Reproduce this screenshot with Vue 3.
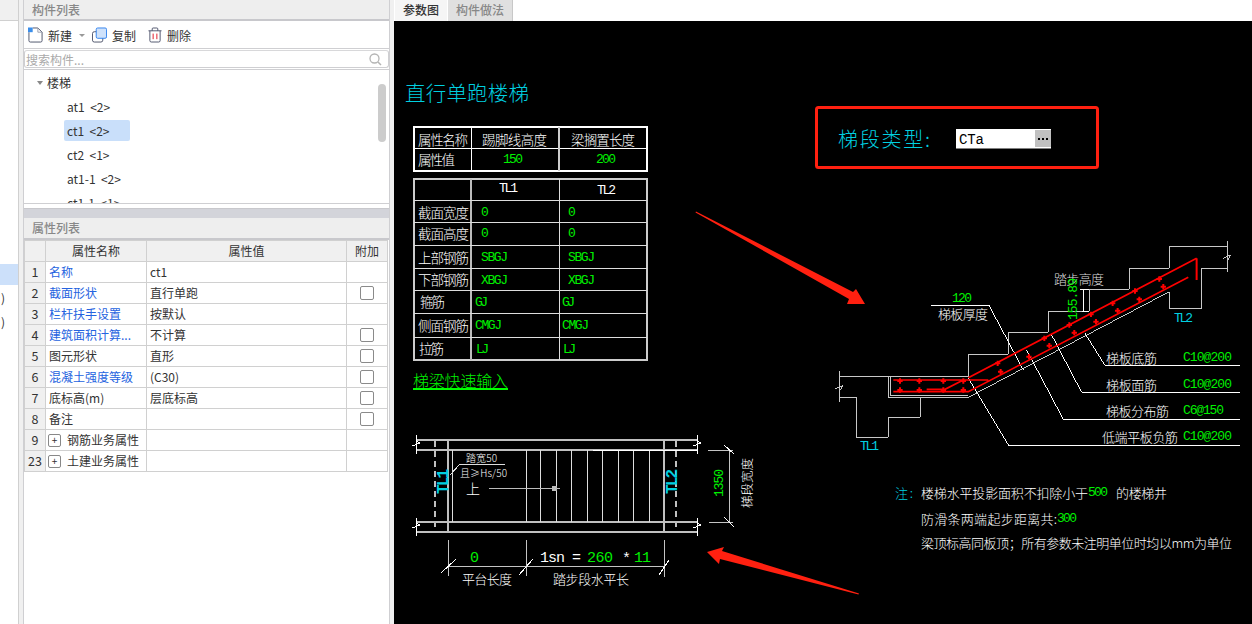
<template>
  <div class="app">
    <div class="strip">
      <div class="strip-top"></div>
      <div class="strip-sel"></div>
      <div class="strip-row">)</div>
      <div class="strip-row">)</div>
    </div>

    <div class="panels">
      <div class="panel-title">构件列表</div>
      <div class="toolbar">
        <svg class="tool-icon" width="15" height="16" viewBox="0 0 16 16">
          <path d="M1 5V14a1.5 1.5 0 0 0 1.5 1.5H13.5A1.500 1.500 0 0 0 15 14V5L10.500 .5H5" fill="none" stroke="#4a5068" />
          <path d="M10.500 .5V5H15" fill="none" stroke="#9aa0b0" />
          <rect x="0" y="0" width="5" height="5" fill="#3b8eea" />
        </svg>
        <span class="tool-label">新建</span>
        <span class="tool-caret"></span>
        <svg class="tool-icon copy" width="15" height="16" viewBox="0 0 16 16">
          <rect x=".5" y="4.500" width="11" height="11" rx="2" fill="#fff" stroke="#4a5068" />
          <rect x="4.500" y=".5" width="11" height="11" rx="1.500" fill="#cfe2fb" stroke="#2f80ed" />
        </svg>
        <span class="tool-label">复制</span>
        <svg class="tool-icon trash" width="14" height="16" viewBox="0 0 15 16">
          <path d="M.5 3.500H14.500M4.500 3.500V1.500A1 1 0 0 1 5.500 .5H9.500A1 1 0 0 1 10.500 1.500V3.500M2 3.500V14A1.500 1.500 0 0 0 3.500 15.500H11.500A1.500 1.500 0 0 0 13 14V3.500" fill="none" stroke="#4a5068" />
          <path d="M5.500 6.500V12.500M9.500 6.500V12.500" stroke="#e01020" />
        </svg>
        <span class="tool-label">删除</span>
      </div>
      <div class="search">
        <span>搜索构件...</span>
        <svg width="13" height="13" viewBox="0 0 13 13">
          <circle cx="5.500" cy="5.500" r="4.500" fill="none" stroke="#b4b4b4" stroke-width="1.300" />
          <path d="M9 9L12 12" stroke="#b4b4b4" stroke-width="1.500" />
        </svg>
      </div>
      <div class="tree">
        <div class="tree-root"><i class="tree-caret"></i>楼梯</div>
        <div
          v-for="item in treeItems"
          :key="item.name"
          :class="['tree-item', { selected: item.name === 'ct1' }]"
        >{{ item.name }}&nbsp; &lt;{{ item.count }}&gt;</div>
        <div class="tree-scroll"></div>
      </div>

      <div class="splitter"></div>
      <div class="panel-title second">属性列表</div>
      <div class="props">
        <table>
          <colgroup>
            <col style="width: 21px" />
            <col style="width: 101px" />
            <col style="width: 200px" />
            <col style="width: 41px" />
          </colgroup>
          <thead>
            <tr>
              <th></th>
              <th>属性名称</th>
              <th>属性值</th>
              <th>附加</th>
            </tr>
          </thead>
          <tbody>
            <tr v-for="row in propRows" :key="row.no">
              <td class="num">{{ row.no }}</td>
              <td v-if="row.group" class="group">
                <span class="plus">+</span>{{ row.name }}
              </td>
              <td v-else :class="{ link: row.link }">{{ row.name }}</td>
              <td>{{ row.value }}</td>
              <td class="check"><span v-if="row.check" class="box"></span></td>
            </tr>
          </tbody>
        </table>
      </div>
    </div>

    <div class="main">
      <div class="tabs">
        <div class="tab active">参数图</div>
        <div class="tab">构件做法</div>
      </div>
      <svg class="cad" viewBox="394 21 858 603" width="858" height="603">
        <!-- 参数表 -->
        <g shape-rendering="crispEdges" fill="none">
          <path d="M414 127H647V171H414ZM414 148.500H647M471.500 127V171" stroke="#fff" stroke-width="1.500" />
          <path d="M559 127V171" stroke="#ccc" stroke-width="2" />
          <path d="M414 179H647V360H414Z" stroke="#ccc" stroke-width="1.500" />
          <path d="M471 179V360" stroke="#bbb" stroke-width="2" />
          <path d="M559.500 179V360M414 200.500H647M414 222.500H647M414 245.500H647M414 268.500H647M414 290.500H647M414 313.500H647M414 337.500H647" stroke="#ddd" />
        </g>

        <!-- 红框和下拉 -->
        <rect x="816.500" y="107.500" width="281" height="60" rx="2" fill="none" stroke="#ff2010" stroke-width="3" />
        <rect x="956" y="129" width="95" height="19.500" fill="#fff" />
        <rect x="1035" y="130" width="16" height="17" fill="#c0c0c0" />
        <path d="M1037.500 138.500H1039.500M1041.500 138.500H1043.500M1045.500 138.500H1047.500" stroke="#000" stroke-width="2" shape-rendering="crispEdges" />

        <!-- 红色箭头 -->
        <path d="M696 211.500L853 292L856 289L865 304L847 304L849 299L695.500 212.500Z" fill="#ff2010" />
        <path d="M707 552L724 547L722 551L859 593.500L858.500 594.500L720 559L719 564Z" fill="#ff2010" />

        <!-- 平面图 -->
        <g shape-rendering="crispEdges" fill="none">
          <path d="M416 440H697M416 450H697M416 522H697M416 532H697M448 441V531M664 441V531" stroke="#c0c0c0" stroke-width="2" />
          <path d="M435 441V531M676 441V531" stroke="#c0c0c0" stroke-width="2.500" stroke-dasharray="6 4" />
          <path d="M416 435V454M416 518V536M697 435V454M697 518V536M412 446L420 443L416 441M412 528L420 525L416 523M693 446L701 443L697 441M693 528L701 525L697 523" stroke="#fff" />
          <path :d="stepLines" stroke="#ddd" />
          <path d="M593 450H697" stroke="#fff" />
          <path d="M450 475L460 464H505" stroke="#ddd" />
          <path d="M489 488H560" stroke="#bbb" />
          <path d="M708 450H733M709 522H733M729 450V522M448 540V576M526 540V576M664 540V577M448 566H664" stroke="#c4c4c4" />
          <path d="M724 445L734 454M724 517L734 527M441 573L456 559M519 575L533 559M659 575L669 560" stroke="#fff" />
        </g>
        <rect x="552" y="486" width="5" height="5" fill="#bbb" />

        <!-- 剖面图，坐标按 1/3 缩放 -->
        <g transform="translate(830 235) scale(0.3333)" fill="none">
          <g shape-rendering="crispEdges">
            <path d="M28 408V500M16 462L38 452L28 470M28 425H415V358H535V292H655V229H778V163H898V100H1018V34H1192M1192 18V110M1180 70L1202 60L1192 78M1192 100H1114V222H1018V170M28 487H79V607H175V547H271V487M175 425V487H415L1018 170M181 425V481H415" stroke="#c8c8c8" stroke-width="3" />
            <path d="M303 211H477L580 405M750 163H778M762 163V229M755 229H778M765 295L825 391H1230M665 300L755 472H1230M590 345L700 553H1230M415 430L537 633H1230" stroke="#fff" stroke-width="3" />
          </g>
          <path d="M190 435H475M290 463H345L400 435M190 470H415L1075 127M415 428L1100 70" stroke="#ff0000" stroke-width="5" />
          <path d="M1100 70V135" stroke="#ff0000" stroke-width="6" />
          <path
            v-for="(dot, i) in rebarDots"
            :key="i"
            :d="`M${dot[0] - 8} ${dot[1]}H${dot[0] + 8}M${dot[0]} ${dot[1] - 8}V${dot[1] + 8}`"
            stroke="#ff0000"
            stroke-width="6"
          />
        </g>

        <!-- 文字 -->
        <text
          v-for="(item, i) in cadTexts"
          :key="i"
          :class="['cad-text', item.color, { mono: item.mono, bold: item.bold }]"
          :x="item.x"
          :y="item.y"
          :font-size="item.size"
          :textLength="item.width"
          :transform="item.rotate ? `rotate(-90 ${item.x} ${item.y})` : undefined"
        >{{ item.text }}</text>
        <path d="M413 388.500H508" stroke="#00ff00" stroke-width="2" shape-rendering="crispEdges" />
      </svg>
    </div>
  </div>
</template>

<script setup>
const treeItems = [
  { name: 'at1', count: 2 },
  { name: 'ct1', count: 2 },
  { name: 'ct2', count: 1 },
  { name: 'at1-1', count: 2 },
  { name: 'ct1-1', count: 1 },
];

const propRows = [
  { no: 1, name: '名称', value: 'ct1', link: true },
  { no: 2, name: '截面形状', value: '直行单跑', link: true, check: true },
  { no: 3, name: '栏杆扶手设置', value: '按默认', link: true },
  { no: 4, name: '建筑面积计算...', value: '不计算', link: true, check: true },
  { no: 5, name: '图元形状', value: '直形', check: true },
  { no: 6, name: '混凝土强度等级', value: '(C30)', link: true, check: true },
  { no: 7, name: '底标高(m)', value: '层底标高', check: true },
  { no: 8, name: '备注', value: '', check: true },
  { no: 9, name: '钢筋业务属性', value: '', group: true },
  { no: 23, name: '土建业务属性', value: '', group: true },
];

const stepLines = [452, 526, 540, 556, 571, 587, 602, 618, 633, 649]
  .map((x) => `M${x} 450V522`)
  .join('');

const rebarDots = [
  [210, 438], [268, 438], [340, 438], [400, 438],
  [210, 465], [268, 465], [340, 465], [400, 465],
  [503, 385], [643, 310], [718, 270], [783, 238], [848, 205], [915, 168], [988, 132],
  [512, 410], [597, 365], [658, 332], [733, 293], [798, 260], [863, 227], [928, 193], [1000, 155],
];

// x, 中线 y, 文字, 宽度, 颜色, 字号
const t = (x, y, text, width, color = 'white', size = 13.5, extra = {}) => ({
  x, y, text, width, color, size, ...extra,
});
const m = { mono: true };

const cadTexts = [
  t(405, 92, '直行单跑楼梯', 124, 'cyan', 20.5),
  t(838, 138, '梯段类型:', 92, 'cyan', 20),
  t(959, 140, 'CTa', 25, 'black', 14, m),

  t(418, 139, '属性名称', 50),
  t(482, 139, '踢脚线高度', 65),
  t(571, 139, '梁搁置长度', 64),
  t(418, 159, '属性值', 37),
  t(503, 159, '150', 20, 'green', 13, m),
  t(596, 159, '200', 20, 'green', 13, m),

  t(499, 188, 'TL1', 19, 'white', 13, m),
  t(597, 190, 'TL2', 19, 'white', 13, m),
  t(418, 212, '截面宽度', 51),
  t(418, 233, '截面高度', 51),
  t(418, 257, '上部钢筋', 51),
  t(418, 279, '下部钢筋', 51),
  t(420, 301, '箍筋', 25),
  t(418, 325, '侧面钢筋', 51),
  t(419, 348, '拉筋', 25),
  t(481, 212, '0', 6, 'green', 13, m),
  t(568, 212, '0', 6, 'green', 13, m),
  t(481, 233, '0', 6, 'green', 13, m),
  t(568, 233, '0', 6, 'green', 13, m),
  t(481, 257, 'SBGJ', 27, 'green', 13, m),
  t(568, 257, 'SBGJ', 27, 'green', 13, m),
  t(481, 280, 'XBGJ', 27, 'green', 13, m),
  t(568, 280, 'XBGJ', 27, 'green', 13, m),
  t(475, 302, 'GJ', 13, 'green', 13, m),
  t(562, 302, 'GJ', 13, 'green', 13, m),
  t(475, 325, 'CMGJ', 27, 'green', 13, m),
  t(562, 325, 'CMGJ', 27, 'green', 13, m),
  t(476, 349, 'LJ', 13, 'green', 13, m),
  t(563, 349, 'LJ', 13, 'green', 13, m),
  t(413, 380, '梯梁快速输入', 95, 'green', 16),

  t(466, 457, '踏宽50', 31, 'white', 10),
  t(460, 472, '且≥Hs/50', 47, 'white', 10),
  t(444, 494, 'TL1', 25, 'cyan', 16, { mono: true, bold: true, rotate: true }),
  t(673, 494, 'TL2', 25, 'cyan', 16, { mono: true, bold: true, rotate: true }),
  t(466, 488, '上', 13, 'white', 14),
  t(719, 497, '1350', 28, 'green', 13, { mono: true, rotate: true }),
  t(746, 508, '梯段宽度', 50, 'white', 12.5, { rotate: true }),
  t(470, 558, '0', 8, 'green', 15, m),
  t(540, 558, '1sn =', 41, 'white', 15, m),
  t(587, 558, '260', 26, 'green', 15, m),
  t(622, 559, '*', 8, 'white', 15, m),
  t(634, 558, '11', 17, 'green', 15, m),
  t(462, 578, '平台长度', 50, 'white', 13),
  t(553, 578, '踏步段水平长', 76, 'white', 13),

  t(952, 298, '120', 20, 'green', 13, m),
  t(938, 313, '梯板厚度', 50, 'white', 13),
  t(1054, 278, '踏步高度', 50, 'soft', 13),
  t(1073, 320, '155.89', 42, 'green', 13, { mono: true, rotate: true }),
  t(1174, 318, 'TL2', 19, 'cyan', 13, m),
  t(860, 446, 'TL1', 19, 'cyan', 13, m),
  t(1106, 357, '梯板底筋', 51, 'white', 13),
  t(1183, 357, 'C10@200', 49, 'green', 13, m),
  t(1106, 384, '梯板面筋', 51, 'white', 13),
  t(1183, 384, 'C10@200', 49, 'green', 13, m),
  t(1106, 410, '梯板分布筋', 63, 'white', 13),
  t(1183, 410, 'C6@150', 41, 'green', 13, m),
  t(1102, 436, '低端平板负筋', 76, 'white', 13),
  t(1183, 436, 'C10@200', 49, 'green', 13, m),

  t(895, 492, '注:', 18, 'cyan', 13),
  t(921, 492, '楼梯水平投影面积不扣除小于', 167, 'white', 13),
  t(1088, 492, '500', 20, 'green', 13, m),
  t(1116, 492, '的楼梯井', 51, 'white', 13),
  t(921, 518, '防滑条两端起步距离共:', 136, 'white', 13),
  t(1057, 518, '300', 20, 'green', 13, m),
  t(921, 542, '梁顶标高同板顶；所有参数未注明单位时均以mm为单位', 311, 'white', 13),
];
</script>

<style>
html,
body {
  margin: 0;
  background: #f0f0f0;
}
</style>

<style scoped>
.app {
  display: flex;
  width: 1252px;
  height: 624px;
  overflow: hidden;
  background: #f0f0f0;
  color: #333;
  font-family: "Noto Sans CJK SC", "Noto Sans", sans-serif;
  font-size: 12px;
}

.strip {
  width: 18px;
  flex: none;
  background: #fff;
  border-right: 1px solid #d0d0d0;
}

.strip-top {
  height: 20px;
  background: #f0f0f0;
  border-bottom: 1px solid #d0d0d0;
}

.strip-sel {
  height: 21px;
  margin-top: 243px;
  background: #cce0fa;
}

.strip-row {
  height: 24px;
  padding-left: 1px;
  line-height: 26px;
}

.panels {
  width: 365px;
  height: 624px;
  flex: none;
  margin-left: 4px;
  background: #fff;
  border-left: 1px solid #cfcfd2;
  border-right: 1px solid #cfcfd2;
}

.panel-title {
  height: 19px;
  padding-left: 8px;
  line-height: 19px;
  background: #eeeeee;
  border-bottom: 2px solid #c8c8cc;
  color: #888;
  font-weight: 500;
}

.panel-title.second {
  height: 20px;
  line-height: 20px;
}

.toolbar {
  display: flex;
  align-items: center;
  height: 26px;
  padding: 1px 0 0 4px;
  border-bottom: 1px solid #cfcfd2;
}

.tool-label {
  margin-left: 5px;
  font-size: 12px;
}

.tool-caret {
  width: 0;
  height: 0;
  margin-left: 7px;
  border: 3px solid transparent;
  border-top: 3px solid #999;
  border-bottom: 0;
}

.tool-icon.copy {
  margin-left: 7px;
}

.tool-icon.trash {
  margin-left: 12px;
}

.search {
  display: flex;
  align-items: center;
  justify-content: space-between;
  height: 16px;
  margin-top: 1px;
  padding: 0 6px 0 1px;
  border: 1px solid #cfcfd2;
  border-top-color: #d8d8da;
  border-radius: 3px;
  color: #aaa;
}

.tree {
  position: relative;
  height: 133px;
  margin-top: 1px;
  overflow: hidden;
  border-top: 1px solid #cfcfd2;
  border-bottom: 1px solid #cfcfd2;
}

.tree-root {
  display: flex;
  align-items: center;
  height: 21px;
  margin-top: 2px;
  padding-left: 13px;
  box-sizing: border-box;
}

.tree-caret {
  width: 0;
  height: 0;
  margin-right: 4px;
  border: 3px solid transparent;
  border-top: 4px solid #888;
  border-bottom: 0;
}

.tree-item {
  width: 66px;
  height: 21px;
  margin: 3px 0 0 40px;
  padding-left: 3px;
  box-sizing: border-box;
  line-height: 21px;
  border-radius: 2px;
  white-space: nowrap;
}

.tree-item.selected {
  background: #c9dffa;
}

.tree-scroll {
  position: absolute;
  top: 14px;
  right: 3px;
  width: 8px;
  height: 58px;
  background: #ccc;
  border-radius: 4px;
}

.splitter {
  height: 9px;
  margin-top: 4px;
  background: #d3d4da;
  border-top: 1px solid #c8c8cc;
}

table {
  width: 363px;
  table-layout: fixed;
  border-collapse: collapse;
}

th,
td {
  height: 20px;
  padding: 0 0 0 3px;
  border: 1px solid #d0d0d0;
  box-sizing: content-box;
  font-weight: 400;
  line-height: 20px;
  white-space: nowrap;
  overflow: hidden;
}

th {
  padding: 0;
  background: #f0f0f0;
  text-align: center;
}

td.num {
  padding: 0;
  background: #f0f0f0;
  text-align: center;
  font-size: 12.500px;
}

td.link {
  color: #2563e0;
}

td.group {
  overflow: visible;
}

td.check {
  padding: 0;
  text-align: center;
  line-height: 0;
}

.box {
  display: inline-block;
  width: 12px;
  height: 12px;
  border: 1px solid #8a8a8a;
  border-radius: 2px;
  vertical-align: middle;
}

.plus {
  display: inline-block;
  width: 11px;
  height: 11px;
  margin: 0 6px 0 -1px;
  border: 1px solid #888;
  border-radius: 2px;
  font-size: 10px;
  line-height: 10px;
  text-align: center;
  vertical-align: 1px;
}

.main {
  flex: 1;
  margin-left: 4px;
  min-width: 0;
  background: #fff;
}

.tabs {
  display: flex;
  height: 21px;
  box-sizing: border-box;
  padding-left: 1px;
}

.tab {
  padding: 0 8px;
  margin-right: 1px;
  line-height: 19px;
  background: #e0e0e0;
  color: #888;
  font-weight: 500;
  border-right: 1px solid #c8c8c8;
}

.tab.active {
  width: 36px;
  background: #f5f5f5;
  color: #333;
  border-right: 0;
}

.cad {
  display: block;
  background: #000;
}

.cad-text {
  font-family: "Noto Sans CJK SC", sans-serif;
  dominant-baseline: central;
  font-weight: 300;
}

.cad-text.mono {
  font-family: "Liberation Mono", monospace;
  font-weight: 400;
}

.cad-text.bold {
  font-weight: 700;
}

.white {
  fill: #fff;
}

.soft {
  fill: #ddd;
}

.green {
  fill: #00f000;
}

.cyan {
  fill: #00d0e0;
}

.black {
  fill: #000;
}
</style>
